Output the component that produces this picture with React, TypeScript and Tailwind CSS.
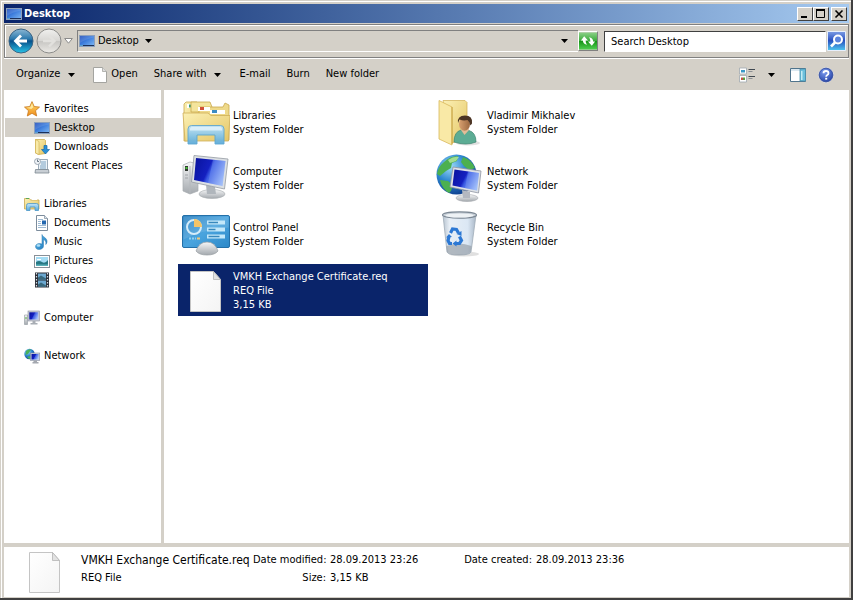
import React from 'react';

const Caret: React.FC = () => (
  <svg width="7" height="4" viewBox="0 0 7 4" className="shrink-0">
    <path d="M0 0h7L3.5 4z" fill="#000" />
  </svg>
);

// Gradients shared by all the icons
const Gradients: React.FC = () => (
  <svg width="0" height="0" className="absolute" aria-hidden="true">
    <defs>
      <linearGradient id="screen" x1="0" y1="0" x2="1" y2="1">
        <stop offset="0" stopColor="#1c48b8" />
        <stop offset="0.45" stopColor="#3c7cdc" />
        <stop offset="1" stopColor="#84bcf4" />
      </linearGradient>
      <linearGradient id="deep" x1="0" y1="0.2" x2="1" y2="0.6">
        <stop offset="0" stopColor="#0a14a0" />
        <stop offset="0.45" stopColor="#1420c0" />
        <stop offset="0.55" stopColor="#3c5ce4" />
        <stop offset="1" stopColor="#a8c4fa" />
      </linearGradient>
      <linearGradient id="folder" x1="0" y1="0" x2="1" y2="1">
        <stop offset="0" stopColor="#fbf0b4" />
        <stop offset="1" stopColor="#e5c666" />
      </linearGradient>
      <linearGradient id="stand" x1="0" y1="0" x2="0" y2="1">
        <stop offset="0" stopColor="#c4e4f8" />
        <stop offset="0.5" stopColor="#8cc8ea" />
        <stop offset="1" stopColor="#5caad8" />
      </linearGradient>
      <linearGradient id="metal" x1="0" y1="0" x2="0" y2="1">
        <stop offset="0" stopColor="#f6f7f8" />
        <stop offset="1" stopColor="#a4a9ae" />
      </linearGradient>
      <linearGradient id="panel" x1="0" y1="0" x2="1" y2="1">
        <stop offset="0" stopColor="#2a80c0" />
        <stop offset="0.5" stopColor="#4aa4de" />
        <stop offset="1" stopColor="#2c88c8" />
      </linearGradient>
      <linearGradient id="paper" x1="0" y1="0" x2="1" y2="1">
        <stop offset="0" stopColor="#ffffff" />
        <stop offset="1" stopColor="#f4f4f4" />
      </linearGradient>
      <linearGradient id="glass" x1="0" y1="0" x2="1" y2="0">
        <stop offset="0" stopColor="#b8c4d0" />
        <stop offset="0.2" stopColor="#e8eff6" />
        <stop offset="0.75" stopColor="#dbe7f4" />
        <stop offset="1" stopColor="#a9b7c6" />
      </linearGradient>
      <radialGradient id="globe" cx="0.35" cy="0.3" r="0.75">
        <stop offset="0" stopColor="#9fdcf8" />
        <stop offset="0.5" stopColor="#2c86d0" />
        <stop offset="1" stopColor="#0c3c8c" />
      </radialGradient>
      <linearGradient id="back" x1="0" y1="0" x2="0" y2="1">
        <stop offset="0" stopColor="#8cb8d4" />
        <stop offset="0.42" stopColor="#2a78ac" />
        <stop offset="0.5" stopColor="#08508a" />
        <stop offset="1" stopColor="#28c4e8" />
      </linearGradient>
      <linearGradient id="forward" x1="0" y1="0" x2="0" y2="1">
        <stop offset="0" stopColor="#f0f0ee" />
        <stop offset="0.48" stopColor="#d8d7d4" />
        <stop offset="0.52" stopColor="#c8c7c4" />
        <stop offset="1" stopColor="#eceae6" />
      </linearGradient>
      <linearGradient id="refresh" x1="0" y1="0" x2="0" y2="1">
        <stop offset="0" stopColor="#8cd088" />
        <stop offset="0.48" stopColor="#3cac3c" />
        <stop offset="0.52" stopColor="#189418" />
        <stop offset="1" stopColor="#50d050" />
      </linearGradient>
      <linearGradient id="search" x1="0" y1="0" x2="0" y2="1">
        <stop offset="0" stopColor="#7c9ce4" />
        <stop offset="0.48" stopColor="#2850c0" />
        <stop offset="1" stopColor="#50c8f0" />
      </linearGradient>
      <radialGradient id="help" cx="0.4" cy="0.3" r="0.8">
        <stop offset="0" stopColor="#7c9cf0" />
        <stop offset="1" stopColor="#1c389c" />
      </radialGradient>
      <linearGradient id="star" x1="0" y1="0" x2="0" y2="1">
        <stop offset="0" stopColor="#ffe070" />
        <stop offset="1" stopColor="#f08c18" />
      </linearGradient>
      <linearGradient id="note" x1="0" y1="0" x2="1" y2="1">
        <stop offset="0" stopColor="#6cc4ee" />
        <stop offset="1" stopColor="#1470b8" />
      </linearGradient>
      <linearGradient id="skin" x1="0" y1="0" x2="1" y2="0">
        <stop offset="0" stopColor="#d8a070" />
        <stop offset="1" stopColor="#9c6840" />
      </linearGradient>
    </defs>
  </svg>
);

const Icon16: React.FC<{ children: React.ReactNode }> = ({ children }) => (
  <svg width="16" height="16" viewBox="0 0 16 16" className="shrink-0">
    {children}
  </svg>
);

const Icon48: React.FC<{ children: React.ReactNode }> = ({ children }) => (
  <svg width="48" height="48" viewBox="0 0 48 48" className="shrink-0">
    {children}
  </svg>
);

const DesktopIcon: React.FC = () => (
  <Icon16>
    <rect x="0.5" y="2.5" width="15" height="11" fill="url(#screen)" stroke="#8ca0bc" />
    <path d="M1 3h14v1.500Q6 6 1 10z" fill="#fff" opacity="0.12" />
    <path d="M1 12h14v1H1z" fill="#1c3058" />
    <path d="M1 12h3v1H1z" fill="#58a0d0" />
  </Icon16>
);

const StarIcon: React.FC = () => (
  <Icon16>
    <path d="M8 .6l2.2 4.9 5.3.6-4 3.6 1.2 5.3L8 12.3 3.3 15l1.2-5.3-4-3.6 5.3-.6z" fill="url(#star)" stroke="#c87820" strokeWidth="0.8" />
    <path d="M8 2.6l1.3 3.6-2 1.8-4.6-1.2 3.6-.5z" fill="#fff4b4" opacity="0.8" />
  </Icon16>
);

const DownloadsIcon: React.FC = () => (
  <Icon16>
    <path d="M1.500.5h9l1 1v13l-7 1-3-1.500z" fill="url(#folder)" stroke="#cfae50" strokeWidth="0.8" />
    <path d="M1.500.5l3.500 2v13l-3.500-1.500z" fill="#f8eaa8" stroke="#cfae50" strokeWidth="0.6" />
    <path d="M10 6.500h3v4h2.500L11.500 15 7.500 10.500H10z" fill="#2a90d8" stroke="#1468a8" strokeWidth="0.7" />
  </Icon16>
);

const RecentIcon: React.FC = () => (
  <Icon16>
    <path d="M4.500 1.500h9v10h-9z" fill="#eef4f8" stroke="#8498a8" strokeWidth="0.8" />
    <path d="M7 4h5M7 6h5M6 8h6M6 10h6" stroke="#6c98bc" strokeWidth="0.9" />
    <path d="M1.500 11.500h13l.500 3.500H1z" fill="#c8ced4" stroke="#7c8890" strokeWidth="0.8" />
    <circle cx="3.500" cy="3.500" r="3" fill="#eef2f6" stroke="#8c98a4" strokeWidth="0.8" />
    <path d="M3.500 1.500v2h1.500" stroke="#485868" strokeWidth="0.8" fill="none" />
  </Icon16>
);

const LibrariesIcon: React.FC = () => (
  <Icon16>
    <path d="M.5 13V2.500h5l1 1.500h8.500v9z" fill="url(#folder)" stroke="#c8a850" strokeWidth="0.8" />
    <path d="M2 2h3v1H2z" fill="#58a858" />
    <path d="M8 3h5v1H8z" fill="#fff" />
    <path d="M2.500 14.500V9.500q0-2 2-2h8q2 0 2 2v5H11v-3.500H6v3.500z" fill="url(#stand)" stroke="#4c98c8" strokeWidth="0.8" />
  </Icon16>
);

const DocumentsIcon: React.FC = () => (
  <Icon16>
    <path d="M2.500.5h8l3 3v12h-11z" fill="#fff" stroke="#7c8c9c" />
    <path d="M10.500.5v3h3" fill="#dce4ec" stroke="#7c8c9c" strokeWidth="0.7" />
    <path d="M4 4.500h5M4 6.500h3M4 8.500h3M4 10.500h8M4 12.500h8" stroke="#94b4d0" strokeWidth="0.9" />
    <path d="M8 5.500h4v4H8z" fill="#2468b0" />
  </Icon16>
);

const MusicIcon: React.FC = () => (
  <Icon16>
    <path d="M8 .5c0 2.500 5.500 3 5 7.500-.1 1-.7 2-1.200 2.500.6-3-.8-4.500-2.300-5V12c0 2-2 3.500-4.500 3.500S1.500 14 1.500 12.500 3 9.500 5.500 9.500c1 0 1.700.2 2.500.6z" fill="url(#note)" stroke="#2878b0" strokeWidth="0.5" />
    <ellipse cx="4.500" cy="11.500" rx="1.800" ry="1.200" fill="#b0e0f8" />
  </Icon16>
);

const PicturesIcon: React.FC = () => (
  <Icon16>
    <rect x="0.5" y="2.500" width="15" height="12" fill="#fff" stroke="#889098" />
    <rect x="2" y="4" width="12" height="9" fill="#a4dcf4" />
    <path d="M2 9q3-2 6 0t6-2v6H2z" fill="#287884" />
    <path d="M2 11.500h12V13H2z" fill="#58b0b8" />
    <path d="M3 6h4v1H3z" fill="#fff" />
  </Icon16>
);

const VideosIcon: React.FC = () => (
  <Icon16>
    <rect x="1" y="0.500" width="14" height="15" fill="#2c3038" />
    <rect x="4" y="1.500" width="8" height="6" fill="#6ca8d0" />
    <rect x="4" y="8.500" width="8" height="6" fill="#6ca8d0" />
    <path d="M4 5.500l3-2 5 3v1H4zM4 12.500l3-2 5 3v1H4z" fill="#38687c" />
    <path d="M2.500 1v14M13.500 1v14" stroke="#d4dce4" strokeWidth="1.200" strokeDasharray="1.500 1.500" />
  </Icon16>
);

const ComputerIcon: React.FC = () => (
  <Icon16>
    <path d="M.5 5h3v9.500h-3z" fill="url(#metal)" stroke="#9098a0" strokeWidth="0.6" />
    <path d="M1.500 7h1v2h-1z" fill="#58b848" />
    <rect x="4" y="1" width="11.500" height="10" fill="#c8ccd4" stroke="#8c90a0" strokeWidth="0.6" />
    <rect x="5.300" y="2.300" width="9" height="7.200" fill="url(#deep)" />
    <path d="M8.500 11h3v2h2v1.500h-7V13h2z" fill="#a8adb4" />
  </Icon16>
);

const NetworkIcon: React.FC = () => (
  <Icon16>
    <circle cx="5.500" cy="6" r="5.200" fill="url(#globe)" />
    <path d="M2 3q3-2.500 5-1.500L5.500 4 4 6 1.500 7zM3 9l3-1 1 2.500-2 .5z" fill="#48b058" />
    <rect x="6.500" y="5" width="9.200" height="7.500" fill="#d0d4dc" stroke="#8890a4" strokeWidth="0.6" />
    <rect x="7.500" y="6" width="7.200" height="5.500" fill="url(#deep)" />
    <path d="M9.500 12.500h3.500v1.500h1.500v1.500h-6V14h1z" fill="#a4a8b0" />
  </Icon16>
);

const LibrariesLarge: React.FC = () => (
  <Icon48>
    <path d="M2 43V6l2-2h11l3 4v34z" fill="url(#folder)" stroke="#c9a84c" strokeWidth="0.8" />
    <path d="M5 6h8v4H5z" fill="#fff" />
    <path d="M7 6.500h5v3H7z" fill="#3c9c70" />
    <path d="M9 4h19l2 5v5H9z" fill="#f4e49c" stroke="#c9a84c" strokeWidth="0.8" />
    <path d="M17 9h24l2-4 4 2v35H17z" fill="#eed98a" stroke="#c9a84c" strokeWidth="0.8" />
    <path d="M16 9h12v4H16z" fill="#fff" />
    <path d="M18 9h4v3h-4z" fill="#d05038" />
    <path d="M28 12h15v4H28z" fill="#fff" />
    <path d="M30 12h5v3h-5z" fill="#3c8cc4" />
    <path d="M1 15h25l3 2.500h19L46.500 43H3z" fill="url(#folder)" stroke="#cfae58" strokeWidth="0.8" />
    <path d="M6 46V31q0-3.500 3.500-3.500h29q3.500 0 3.500 3.500v15h-9V37H15v9z" fill="url(#stand)" stroke="#58a4d0" strokeWidth="0.9" opacity="0.95" />
    <path d="M8 31q0-2 2-2h28q2 0 2 2v1.500H8z" fill="#e4f4fc" opacity="0.8" />
  </Icon48>
);

const ComputerLarge: React.FC = () => (
  <Icon48>
    <path d="M1 11l7-3 8 2v27l-8 3-7-3z" fill="url(#metal)" stroke="#a8acb0" strokeWidth="0.7" />
    <path d="M8 12v27" stroke="#b4b8bc" />
    <rect x="3" y="12" width="3" height="5" fill="#303830" />
    <rect x="3.500" y="13" width="2" height="2" fill="#4cc43c" />
    <path d="M3 21h3M3 24h3" stroke="#a0a4a8" />
    <ellipse cx="30" cy="40" rx="13" ry="4.500" fill="url(#metal)" stroke="#a8acb0" strokeWidth="0.6" />
    <path d="M24 31l9 2 1 7h-9z" fill="#b0b6bc" />
    <path d="M12 1.500L46 5 42.500 35 9.500 28z" fill="#dce0e4" stroke="#949aa2" strokeWidth="0.8" />
    <path d="M14 4l29.500 3-3 25L12 26z" fill="url(#deep)" />
    <path d="M31 5.700L43.500 7l-3 25L26 29z" fill="#8ca8f4" opacity="0.3" />
  </Icon48>
);

const ControlPanelLarge: React.FC = () => (
  <Icon48>
    <rect x="0.500" y="5.500" width="47" height="32" rx="1.500" fill="url(#panel)" stroke="#2470a8" />
    <path d="M1.500 6.500h45v11q-25 2-45 12z" fill="#fff" opacity="0.12" />
    <circle cx="12" cy="17" r="7" fill="none" stroke="#d4ecfa" strokeWidth="2" />
    <path d="M12 17V9a8 8 0 0 1 8 8z" fill="#f4c468" />
    <path d="M25 12.500h18M25 19.500h18M25 26.500h18" stroke="#c4e8fa" strokeWidth="4" />
    <path d="M26.500 12.500H36M26.500 19.500h7M26.500 26.500h11" stroke="#3888bc" strokeWidth="1.500" />
    <path d="M7 28.500h7" stroke="#90d0f0" strokeWidth="2" strokeDasharray="2 1" />
    <path d="M15 28.500h3" stroke="#f0c878" strokeWidth="2" />
    <path d="M14 41q3-9 11-9t11 9q-3 4-11 4t-11-4z" fill="url(#metal)" stroke="#989da2" strokeWidth="0.7" />
  </Icon48>
);

const UserLarge: React.FC = () => (
  <Icon48>
    <ellipse cx="32" cy="45" rx="12" ry="2.500" fill="#000" opacity="0.12" />
    <path d="M7 2.500h22l2 2V40L16 45z" fill="url(#folder)" stroke="#d0ae50" strokeWidth="0.7" />
    <path d="M3 2.500l13 6.500V47L3 41z" fill="#f9e9a6" stroke="#d8b85c" strokeWidth="0.8" />
    <path d="M16 9v37" stroke="#c8a444" />
    <path d="M18 44q0-10 7-12l8 .5q7 2 7 11.500-10 4-22 0z" fill="#5cac94" stroke="#3c8470" strokeWidth="0.7" />
    <path d="M25 32l3.500 5 4.500-5-1-3h-6z" fill="#e4bc98" />
    <ellipse cx="28.500" cy="26" rx="5.500" ry="6.800" fill="url(#skin)" />
    <path d="M22 25q-1-7.500 7-7.500t7 8l-1.500 2q-1-4-3-5.500-4 1-8-.5z" fill="#4c3424" />
  </Icon48>
);

const NetworkLarge: React.FC = () => (
  <Icon48>
    <circle cx="20.500" cy="20.500" r="20" fill="url(#globe)" />
    <path d="M8 8q6-6 14-6l-1 5-5 2-1 5-5 3-6 5-3-2q1-7 7-12zM27 3q9 3 12 11l-6 2-5-4-3-4zM4 26l8 1 5 4-2 6-2 2Q6 35 4 26z" fill="#4cb050" />
    <path d="M12 6q6-4 11-3l-3 4-6 2z" fill="#b8e8a0" opacity="0.8" />
    <ellipse cx="31" cy="44" rx="11" ry="3.500" fill="url(#metal)" stroke="#a4a8ac" strokeWidth="0.6" />
    <path d="M26 36l8 2v6h-7z" fill="#b4b8c0" />
    <path d="M17 13l28 4-2.500 22L14 33z" fill="#dde1e6" stroke="#8f96a2" strokeWidth="0.8" />
    <path d="M18.500 15.500L43 19l-2 17.500-24.500-5z" fill="url(#deep)" />
    <path d="M32 17.500l11 1.500-2 17.500-12-2.500z" fill="#90b0f8" opacity="0.3" />
  </Icon48>
);

const RecycleLarge: React.FC = () => (
  <Icon48>
    <ellipse cx="28" cy="44" rx="15" ry="2.500" fill="#000" opacity="0.12" />
    <path d="M7 5l4 37q1 3 12 3t12-3l5-37z" fill="url(#glass)" stroke="#a0acb8" strokeWidth="0.8" />
    <path d="M10.500 36q12-5 25 0l-.8 6q-2 3-11.700 3T11 42z" fill="#8c949c" opacity="0.6" />
    <ellipse cx="23.500" cy="5" rx="17" ry="3.200" fill="#c8d0d8" stroke="#7c8894" strokeWidth="1.200" />
    <ellipse cx="23.500" cy="5.500" rx="14" ry="2" fill="#eef2f5" />
    <g fill="none" stroke="#2c78d4" strokeWidth="3.200">
      <path d="M14.500 23l2-4 4 .5 2 3.500" />
      <path d="M23.500 26.500l2 4-2 3h-4" />
      <path d="M16 33.500h-2.500l-1.500-3 1-4" />
    </g>
    <path d="M20.500 24l5-3v5zM20.500 30.500v6l-4-3zM10 27.500l3-3.500 3 3z" fill="#2c78d4" />
  </Icon48>
);

const FileLarge: React.FC = () => (
  <Icon48>
    <path d="M8.500 5.500h23l7 8v32h-30z" fill="url(#paper)" stroke="#c4c4c4" />
    <path d="M31.500 5.500v8h7z" fill="#e2e2e2" stroke="#b4b4b4" strokeWidth="0.8" />
  </Icon48>
);

type NavItem = { label: string; icon: React.FC; selected?: boolean };

const navGroups: { head: NavItem; items: NavItem[] }[] = [
  {
    head: { label: 'Favorites', icon: StarIcon },
    items: [
      { label: 'Desktop', icon: DesktopIcon, selected: true },
      { label: 'Downloads', icon: DownloadsIcon },
      { label: 'Recent Places', icon: RecentIcon },
    ],
  },
  {
    head: { label: 'Libraries', icon: LibrariesIcon },
    items: [
      { label: 'Documents', icon: DocumentsIcon },
      { label: 'Music', icon: MusicIcon },
      { label: 'Pictures', icon: PicturesIcon },
      { label: 'Videos', icon: VideosIcon },
    ],
  },
  { head: { label: 'Computer', icon: ComputerIcon }, items: [] },
  { head: { label: 'Network', icon: NetworkIcon }, items: [] },
];

const files = [
  { name: 'Libraries', lines: ['System Folder'], icon: LibrariesLarge },
  { name: 'Vladimir Mikhalev', lines: ['System Folder'], icon: UserLarge },
  { name: 'Computer', lines: ['System Folder'], icon: ComputerLarge },
  { name: 'Network', lines: ['System Folder'], icon: NetworkLarge },
  { name: 'Control Panel', lines: ['System Folder'], icon: ControlPanelLarge },
  { name: 'Recycle Bin', lines: ['System Folder'], icon: RecycleLarge },
  { name: 'VMKH Exchange Certificate.req', lines: ['REQ File', '3,15 KB'], icon: FileLarge, selected: true },
];

const captionButton =
  'flex h-[14px] w-4 items-center justify-center border border-t-white border-l-white border-r-[#404040] border-b-[#404040] bg-[#d4d0c8]';

const TitleBar: React.FC = () => (
  <header className="flex h-[19px] shrink-0 items-center bg-linear-to-r from-[#0a246a] to-[#a6caf0] px-[2px]">
    <DesktopIcon />
    <h1 className="ml-[2px] flex-1 pt-[2px] font-bold text-white">Desktop</h1>
    <button className={captionButton} aria-label="Minimize">
      <svg width="10" height="10" viewBox="0 0 10 10">
        <path d="M1 7h6v2H1z" />
      </svg>
    </button>
    <button className={captionButton} aria-label="Maximize">
      <svg width="10" height="10" viewBox="0 0 10 10">
        <path d="M.5 1.500h8v7h-8z" fill="none" stroke="#000" />
        <path d="M0 0h9v2H0z" />
      </svg>
    </button>
    <button className={`${captionButton} ml-[2px]`} aria-label="Close">
      <svg width="10" height="10" viewBox="0 0 10 10">
        <path d="M1.500 1.500l7 7M8.500 1.500l-7 7" stroke="#000" strokeWidth="1.600" />
      </svg>
    </button>
  </header>
);

const AddressBar: React.FC = () => (
  <div className="mt-px flex h-[34px] shrink-0 items-center border border-[#808080] pl-[3px] shadow-[inset_1px_1px_0_#fff,0_1px_0_#fff]">
    <button aria-label="Back">
      <svg width="26" height="26" viewBox="0 0 26 26">
        <circle cx="13" cy="13" r="12" fill="url(#back)" stroke="#3c6484" />
        <path d="M19 13H8.500M13 7.500L7.500 13l5.500 5.500" fill="none" stroke="#fff" strokeWidth="2.800" />
      </svg>
    </button>
    <button className="ml-[2px]" aria-label="Forward">
      <svg width="26" height="26" viewBox="0 0 26 26">
        <circle cx="13" cy="13" r="12" fill="url(#forward)" stroke="#8c8c8a" />
        <path d="M7 13h10.500M13 7.500l5.500 5.500-5.500 5.500" fill="none" stroke="#e2e1de" strokeWidth="2.400" />
      </svg>
    </button>
    <button className="ml-[2px]" aria-label="Recent pages">
      <svg width="9" height="6" viewBox="0 0 9 6">
        <path d="M.7.5h7.600L4.500 5.200z" fill="#fff" stroke="#808080" strokeWidth="0.900" />
      </svg>
    </button>
    <nav className="ml-1 flex h-[22px] flex-1 items-center border-t border-b border-l border-t-[#808080] border-l-[#808080] border-b-white pr-[10px] pl-px" aria-label="Address">
      <button className="flex items-center">
        <DesktopIcon />
        <span className="mr-[6px] ml-[3px]">Desktop</span>
        <Caret />
      </button>
      <button className="ml-auto" aria-label="Previous locations">
        <Caret />
      </button>
    </nav>
    <button className="border border-t-white border-l-white border-r-[#808080] border-b-[#808080]" aria-label="Refresh">
      <svg width="18" height="18" viewBox="0 0 19 18">
        <path d="M0 0h19v18H0z" fill="url(#refresh)" />
        <path d="M2 8.500L5.500 4l4 4.500H7Q7 11.500 8.500 13 4.500 12.500 4 8.500z" fill="#fff" />
        <path d="M17 9.500L13.500 14l-4-4.500H12Q12 6.500 10.500 5 14.500 5.500 15 9.500z" fill="#fff" />
      </svg>
    </button>
    <input
      type="text"
      aria-label="Search Desktop"
      placeholder="Search Desktop"
      className="ml-[6px] h-[21px] w-[222px] border border-t-[#404040] border-l-[#404040] border-r-white border-b-white bg-white px-[6px] placeholder:text-black"
    />
    <button className="mr-[2px] ml-px" aria-label="Search">
      <svg width="19" height="20" viewBox="0 0 19 20">
        <path d="M.5.5h18v19H.5z" fill="url(#search)" stroke="#e8f0fc" />
        <circle cx="11" cy="8.500" r="4" fill="#5c84dc" stroke="#fff" strokeWidth="2" />
        <path d="M8 11.500L4 15.500" stroke="#fff" strokeWidth="2.600" />
      </svg>
    </button>
  </div>
);

const CommandBar: React.FC = () => (
  <div className="mt-px flex h-[31px] shrink-0 items-center pr-[15px] pl-3">
    <button className="flex items-center gap-2">
      Organize <Caret />
    </button>
    <button className="ml-[18px] flex items-center gap-1">
      <svg width="14" height="16" viewBox="0 0 14 16">
        <path d="M.5.5h9l4 4v11H.5z" fill="#fff" stroke="#a4a4a0" />
        <path d="M9.500.5v4h4" fill="#ddd" stroke="#a4a4a0" strokeWidth="0.800" />
      </svg>
      Open
    </button>
    <button className="ml-4 flex items-center gap-2">
      Share with <Caret />
    </button>
    <button className="ml-[18px]">E-mail</button>
    <button className="ml-4">Burn</button>
    <button className="ml-4">New folder</button>
    <button className="ml-auto flex items-center gap-3" aria-label="Change your view">
      <svg width="17" height="16" viewBox="0 0 17 16">
        <path d="M.5 1h7v6h-7zM.5 8.500h7v6.500h-7z" fill="#fff" stroke="#a0a8b0" strokeWidth="0.800" />
        <path d="M2 3h4v2.500H2z" fill="#3898c8" />
        <path d="M2 10.500h2V13H2z" fill="#c85048" />
        <path d="M4 10.500h2V13H4z" fill="#58a040" />
        <path d="M9.500 2.500h6.500M9.500 9.500h6.500" stroke="#404850" />
        <path d="M9.500 4.500h4M9.500 11.500h4" stroke="#8c9094" />
      </svg>
      <Caret />
    </button>
    <button className="ml-[15px]" aria-label="Show the preview pane">
      <svg width="16" height="14" viewBox="0 0 16 14">
        <path d="M.5.5h15v13H.5z" fill="#fff" stroke="#50748c" />
        <path d="M1 1h14v2H1z" fill="#dce8f0" />
        <path d="M10 1h5.500v12H10z" fill="#6cc0dc" stroke="#4890ac" strokeWidth="0.800" />
        <path d="M11 3h1.500v9H11z" fill="#c4ecf4" />
      </svg>
    </button>
    <button className="ml-3" aria-label="Get help">
      <svg width="16" height="16" viewBox="0 0 16 16">
        <circle cx="8" cy="8" r="7.300" fill="url(#help)" stroke="#e4e8f4" strokeWidth="0.600" />
        <circle cx="8" cy="8" r="6.800" fill="none" stroke="#344c9c" strokeWidth="0.800" />
        <path d="M5.500 6.300Q5.500 4 8 4t2.500 2.200Q10.500 7.300 9 8.200 8.200 8.700 8.200 9.800" fill="none" stroke="#fff" strokeWidth="1.800" />
        <path d="M7.200 10.800h2v1.800h-2z" fill="#fff" />
      </svg>
    </button>
  </div>
);

const Sidebar: React.FC = () => (
  <nav className="flex w-[157px] shrink-0 flex-col gap-[19px] overflow-hidden bg-white pt-[9px] pl-px" aria-label="Places">
    {navGroups.map(({ head, items }) => (
      <div key={head.label}>
        <a href="#" className="flex h-[19px] items-center gap-1 pl-[19px]">
          <head.icon />
          <span className="pt-[2px]">{head.label}</span>
        </a>
        {items.map(item => (
          <a
            key={item.label}
            href="#"
            className={`flex h-[19px] items-center gap-1 pl-[29px] ${item.selected ? 'bg-[#d4d0c8]' : ''}`}
          >
            <item.icon />
            <span className="pt-[2px]">{item.label}</span>
          </a>
        ))}
      </div>
    ))}
  </nav>
);

const FileList: React.FC = () => (
  <main className="flex-1 bg-white pt-[6px] pl-[14px]">
    <ul className="grid grid-cols-[repeat(2,250px)] gap-1">
      {files.map(file => (
        <li
          key={file.name}
          className={`flex h-[52px] items-center gap-[3px] px-1 leading-[14px] ${file.selected ? 'bg-[#0a246a] text-white' : ''}`}
        >
          <file.icon />
          <div className="pt-[2px]">
            <p>{file.name}</p>
            {file.lines.map(line => (
              <p key={line}>{line}</p>
            ))}
          </div>
        </li>
      ))}
    </ul>
  </main>
);

const DetailsPane: React.FC = () => (
  <footer className="mt-1 flex h-[50px] shrink-0 items-start bg-white pl-[17px]">
    <FileLarge />
    <dl className="ml-3 grid grid-cols-[168px_73px_126px_72px_auto] gap-x-1 pt-1 leading-[18px]">
      <dt className="text-xs leading-[18px] whitespace-nowrap">VMKH Exchange Certificate.req</dt>
      <dt className="text-right whitespace-nowrap">Date modified:</dt>
      <dd className="whitespace-nowrap">28.09.2013 23:26</dd>
      <dt className="text-right whitespace-nowrap">Date created:</dt>
      <dd className="whitespace-nowrap">28.09.2013 23:36</dd>
      <dt>REQ File</dt>
      <dt className="text-right">Size:</dt>
      <dd>3,15 KB</dd>
    </dl>
  </footer>
);

const App: React.FC = () => {
  return (
    <div className="flex h-screen flex-col border-r-2 border-b-2 border-[#404040] bg-[#d4d0c8] font-['DejaVu_Sans_Condensed','DejaVu_Sans',sans-serif] text-[11px] text-black">
      <Gradients />
      <div className="flex min-h-0 flex-1 flex-col border-t border-l border-[#d4d0c8] pt-[3px] pr-[2px] pb-px pl-[3px] shadow-[inset_1px_1px_0_#fff]">
        <TitleBar />
        <AddressBar />
        <CommandBar />
        <div className="flex min-h-0 flex-1 gap-[3px]">
          <Sidebar />
          <FileList />
        </div>
        <DetailsPane />
      </div>
    </div>
  );
};

export default App;
